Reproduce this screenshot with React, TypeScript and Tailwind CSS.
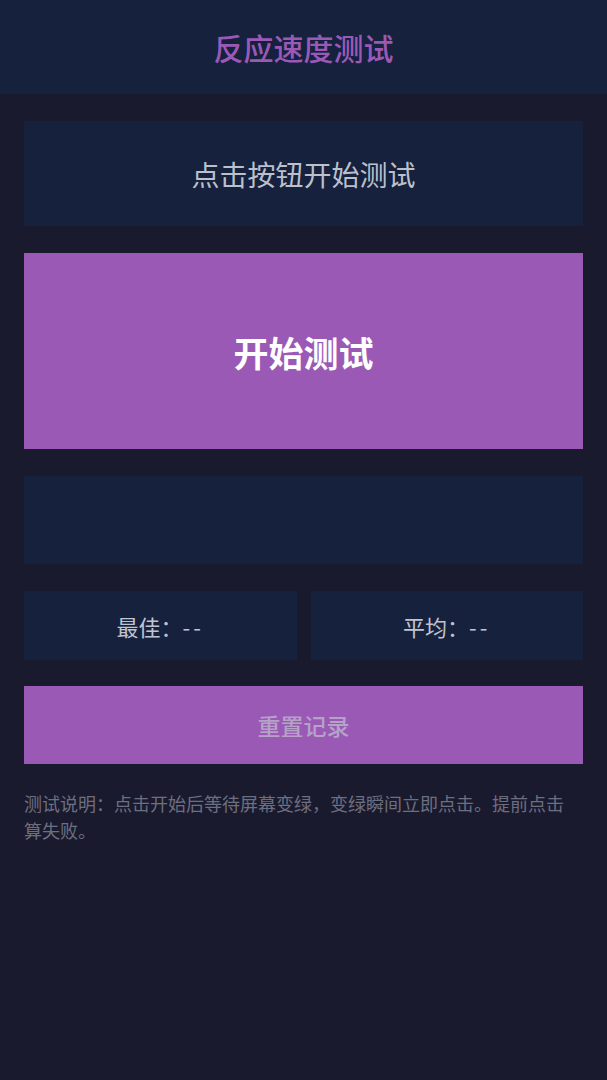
import React from "react";

export default function App() {
  return (
    <div
      className="min-h-[1080px] w-full bg-[#1a1a2e] flex flex-col"
      style={{ fontFamily: '"Noto Sans CJK SC", "Noto Sans", sans-serif' }}
    >
      <header className="h-[94px] bg-[#16213e] flex items-center justify-center">
        <h1 className="text-[30px] leading-none font-medium text-[#9b59b6]">反应速度测试</h1>
      </header>
      <main className="px-[24px] pt-[27px] flex flex-col">
        <div className="h-[105px] bg-[#16213e] flex items-center justify-center">
          <span className="text-[28px] leading-none text-[#bcc0cc]">点击按钮开始测试</span>
        </div>
        <button className="mt-[27px] h-[196px] bg-[#9b59b6] flex items-center justify-center">
          <span className="text-[35px] leading-none font-bold text-white">开始测试</span>
        </button>
        <div className="mt-[27px] h-[88px] bg-[#16213e]" />
        <div className="mt-[27px] grid grid-cols-2 gap-[14px]">
          <div className="h-[69px] bg-[#16213e] flex items-center justify-center">
            <span className="text-[22px] leading-none text-[#c0c4d0]">
              最佳：<span className="tracking-[3px]">--</span>
            </span>
          </div>
          <div className="h-[69px] bg-[#16213e] flex items-center justify-center">
            <span className="text-[22px] leading-none text-[#c0c4d0]">
              平均：<span className="tracking-[3px]">--</span>
            </span>
          </div>
        </div>
        <button className="mt-[26px] h-[78px] bg-[#9b59b6] flex items-center justify-center">
          <span className="text-[23px] leading-none font-medium text-[#b4a3c6]">重置记录</span>
        </button>
        <p className="mt-[26px] mr-[6px] text-[18px] leading-[27px] text-[#6c6f80]">
          测试说明：点击开始后等待屏幕变绿，变绿瞬间立即点击。提前点击算失败。
        </p>
      </main>
    </div>
  );
}
